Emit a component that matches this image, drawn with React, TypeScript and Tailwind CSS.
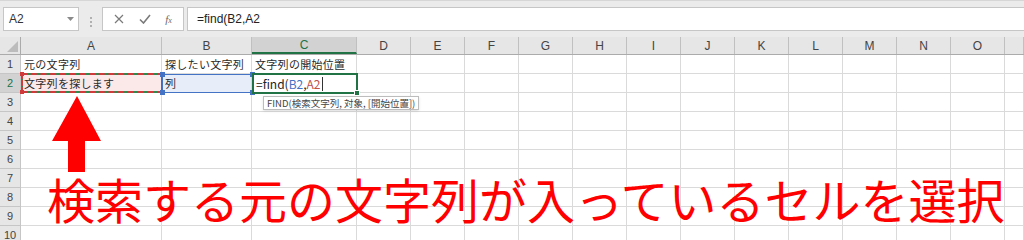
import React from 'react';

const COLS = [
  { label: 'A', w: 'w-[141px]' },
  { label: 'B', w: 'w-[90px]' },
  { label: 'C', w: 'w-[105px]' },
  { label: 'D', w: 'w-[54px]' },
  { label: 'E', w: 'w-[54px]' },
  { label: 'F', w: 'w-[54px]' },
  { label: 'G', w: 'w-[54px]' },
  { label: 'H', w: 'w-[54px]' },
  { label: 'I', w: 'w-[54px]' },
  { label: 'J', w: 'w-[54px]' },
  { label: 'K', w: 'w-[54px]' },
  { label: 'L', w: 'w-[54px]' },
  { label: 'M', w: 'w-[54px]' },
  { label: 'N', w: 'w-[54px]' },
  { label: 'O', w: 'w-[54px]' },
  { label: '', w: 'flex-1' },
];

const ROWS = [1, 2, 3, 4, 5, 6, 7, 8, 9, 10];

const DATA: Record<string, string> = {
  '1-0': '元の文字列',
  '1-1': '探したい文字列',
  '1-2': '文字列の開始位置',
  '2-0': '文字列を探します',
  '2-1': '列',
};

const CJK = "font-['Noto_Sans_CJK_JP','Noto_Sans',sans-serif]";

function Toolbar() {
  return (
    <div className="h-[37px] bg-[#ebebeb] border-t border-[#d6d6d6] flex pt-[6px] font-['Liberation_Sans',sans-serif]">
      {/* Name box */}
      <div className="ml-[3px] w-[76px] h-[24px] bg-white border border-[#c6c6c6] flex items-center justify-between pl-[5px] pr-[4px]">
        <span className="text-[12px] text-[#333]">A2</span>
        <svg width="7" height="4" viewBox="0 0 7 4">
          <path d="M0 0h7L3.5 4z" fill="#8a8a8a" />
        </svg>
      </div>
      {/* Separator dots */}
      <div className="w-[23px] flex flex-col items-center justify-center gap-[2px]">
        <span className="w-[2px] h-[2px] bg-[#b0b0b0]" />
        <span className="w-[2px] h-[2px] bg-[#b0b0b0]" />
        <span className="w-[2px] h-[2px] bg-[#b0b0b0]" />
      </div>
      {/* Formula buttons */}
      <div className="w-[82px] h-[24px] bg-white border border-[#c6c6c6] flex items-center justify-around px-[4px]">
        <svg width="10" height="10" viewBox="0 0 10 10">
          <path d="M1 1l8 8M9 1l-8 8" stroke="#7a7a7a" strokeWidth="1.2" />
        </svg>
        <svg width="12" height="10" viewBox="0 0 12 10">
          <path d="M1 5.5l3.5 3.5L11 1" stroke="#7a7a7a" strokeWidth="1.6" fill="none" />
        </svg>
        <span className="text-[11px] italic text-[#6a6a6a] font-['Liberation_Serif',serif]">
          f<span className="text-[8px]">x</span>
        </span>
      </div>
      {/* Formula input */}
      <div className="ml-[3px] flex-1 h-[24px] bg-white border-y border-l border-[#c6c6c6] flex items-center pl-[9px]">
        <span className="text-[12px] text-[#222]">=find(B2,A2</span>
      </div>
    </div>
  );
}

function HeaderRow() {
  return (
    <div className="flex h-[18px] bg-[#e6e6e6] border-b border-[#ababab]">
      <div className="w-[21px] border-r border-[#ababab] relative">
        <svg className="absolute right-[2px] bottom-[2px]" width="11" height="11" viewBox="0 0 11 11">
          <path d="M11 0v11H0z" fill="#bcbcbc" />
        </svg>
      </div>
      {COLS.map((c) => (
        <div
          key={c.label || 'end'}
          className={`${c.w} shrink-0 flex items-center justify-center text-[12px] border-r border-[#c0c0c0] ${
            c.label === 'C' ? 'bg-[#d2d2d2] text-[#217346] border-b-2 border-b-[#217346]' : 'text-[#444]'
          }`}
        >
          {c.label}
        </div>
      ))}
    </div>
  );
}

function GridRow({ n }: { n: number }) {
  const sel = n === 2;
  return (
    <div className="flex h-[19px]">
      <div
        className={`w-[21px] shrink-0 flex items-center justify-center text-[11px] border-r border-b border-[#c6c6c6] ${
          sel ? 'bg-[#d2d2d2] text-[#217346]' : 'bg-[#e6e6e6] text-[#444]'
        }`}
      >
        {n}
      </div>
      {COLS.map((c, i) => {
        const text = DATA[`${n}-${i}`];
        const fill = n === 2 && i === 0 ? 'bg-[#fbe9e9]' : n === 2 && i === 1 ? 'bg-[#e7eef9]' : '';
        return (
          <div
            key={i}
            className={`${c.w} shrink-0 border-r border-b border-[#dadada] flex items-center pl-[3px] overflow-visible whitespace-nowrap text-[11px] tracking-[0.3px] text-[#2a2a2a] ${CJK} ${fill}`}
          >
            {text}
          </div>
        );
      })}
    </div>
  );
}

export default function App() {
  return (
    <div className="w-[1024px] h-[240px] overflow-hidden bg-white relative font-['Liberation_Sans',sans-serif]">
      <Toolbar />
      <div className="relative">
        <HeaderRow />
        {ROWS.map((n) => (
          <GridRow key={n} n={n} />
        ))}

        {/* A2 reference marquee */}
        <div className="absolute left-[21px] top-[36px] w-[142px] h-[20px] border-2 border-[#2f8a4f]" />
        <div className="absolute left-[21px] top-[36px] w-[142px] h-[20px] border-2 border-dashed border-[#d03a3a]" />
        <span className="absolute left-[20px] top-[35px] w-[4px] h-[4px] bg-[#d03a3a]" />
        <span className="absolute left-[160px] top-[35px] w-[4px] h-[4px] bg-[#d03a3a]" />
        <span className="absolute left-[20px] top-[53px] w-[4px] h-[4px] bg-[#d03a3a]" />
        <span className="absolute left-[160px] top-[53px] w-[4px] h-[4px] bg-[#d03a3a]" />

        {/* B2 reference box */}
        <div className="absolute left-[162px] top-[37px] w-[91px] h-[19px] border-[1.5px] border-[#4472c4]" />
        <span className="absolute left-[160px] top-[35px] w-[5px] h-[5px] bg-[#4472c4]" />
        <span className="absolute left-[250px] top-[35px] w-[5px] h-[5px] bg-[#4472c4]" />
        <span className="absolute left-[160px] top-[53px] w-[5px] h-[5px] bg-[#4472c4]" />
        <span className="absolute left-[250px] top-[53px] w-[5px] h-[5px] bg-[#4472c4]" />

        {/* C2 active cell */}
        <div className="absolute left-[252px] top-[36px] w-[106px] h-[21px] border-2 border-[#217346] bg-white flex items-center pl-[2px] text-[12px] text-[#222]">
          <span className={CJK}>
            =find(<span className="text-[#4472c4]">B2</span>,<span className="text-[#c0504d]">A2</span>
          </span>
          <span className="ml-[1px] w-[1px] h-[14px] bg-[#333]" />
        </div>
        <span className="absolute left-[354px] top-[53px] w-[6px] h-[6px] bg-[#217346] border border-white" />

        {/* Function tooltip */}
        <div className="absolute left-[263px] top-[59px] h-[14px] px-[3px] bg-white border border-[#bdbdbd] shadow-sm flex items-center text-[9.5px] text-[#444] whitespace-nowrap">
          <span className={CJK}>FIND(検索文字列, 対象, [開始位置])</span>
        </div>

        {/* Red arrow */}
        <svg className="absolute left-[50px] top-[59px]" width="54" height="78" viewBox="0 0 54 78">
          <path d="M27 0L51 45H35V76H18V45H2z" fill="#ff0000" />
        </svg>

        {/* Caption */}
        <div className={`absolute left-[47px] top-[137px] text-[48px] leading-none text-[#ff0000] whitespace-nowrap ${CJK}`}>
          検索する元の文字列が入っているセルを選択
        </div>
      </div>
    </div>
  );
}
